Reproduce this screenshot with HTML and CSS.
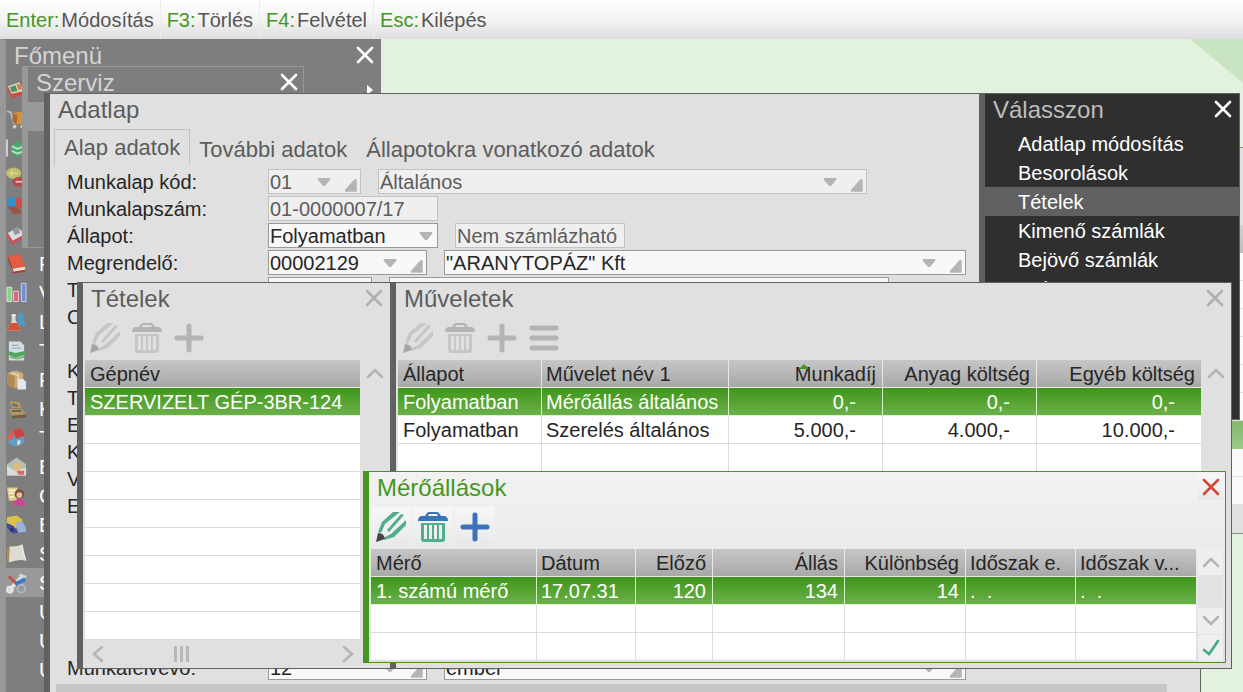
FILE: index.html
```html
<!DOCTYPE html>
<html lang="hu">
<head>
  <meta charset="UTF-8">
  <title>Szerviz</title>
  <link rel="stylesheet" href="styles.css">
</head>
<body>
  <svg class="defs" width="0" height="0">
    <symbol id="close" viewBox="0 0 18 18"><path d="M2 2L16 16M16 2L2 16" fill="none" stroke="currentColor" stroke-width="2.6" stroke-linecap="round"/></symbol>
    <symbol id="pencil" viewBox="0 0 30 30">
      <path class="c-pen" d="M2 20L6 10L17 0H24L9 12L5 21ZM11 18L25 2L28 3L13 20ZM8 28L9 25L15 22L30 8V13L18 25Z"/>
      <path class="c-tip" d="M0 30L2 21Q8 21 9 27Z"/>
    </symbol>
    <symbol id="trash" viewBox="0 0 30 30">
      <path class="c-lid" d="M7 4L9 1Q10 0 11 0H19Q20 0 21 1L23 4H27Q30 5 30 9H0Q0 5 3 4ZM10 4H20L19 2H11Z" fill-rule="evenodd"/>
      <path class="c-can" d="M3 11H27V27Q27 30 24 30H6Q3 30 3 27ZM6 13V27H9V13ZM11 13V27H14V13ZM16 13V27H19V13ZM21 13V27H24V13Z" fill-rule="evenodd"/>
    </symbol>
    <symbol id="plus" viewBox="0 0 30 30"><path class="c-plus" d="M15 3V27M3 15H27" fill="none" stroke-width="5" stroke-linecap="round"/></symbol>
    <symbol id="lines" viewBox="0 0 30 30"><path class="c-plus" d="M3 5H27M3 15H27M3 25H27" fill="none" stroke-width="5" stroke-linecap="round"/></symbol>
    <symbol id="up" viewBox="0 0 18 18"><path d="M2 13L9 6L16 13" fill="none" stroke="currentColor" stroke-width="2.5" stroke-linecap="round"/></symbol>
    <symbol id="down" viewBox="0 0 18 18"><path d="M2 5L9 12L16 5" fill="none" stroke="currentColor" stroke-width="2.5" stroke-linecap="round"/></symbol>
    <symbol id="left" viewBox="0 0 18 18"><path d="M13 2L5 9L13 16" fill="none" stroke="currentColor" stroke-width="2.5" stroke-linecap="round"/></symbol>
    <symbol id="right" viewBox="0 0 18 18"><path d="M5 2L13 9L5 16" fill="none" stroke="currentColor" stroke-width="2.5" stroke-linecap="round"/></symbol>
    <symbol id="check" viewBox="0 0 18 18"><path d="M2 11L7 15L16 2" fill="none" stroke="currentColor" stroke-width="2.6" stroke-linecap="round"/></symbol>
    <symbol id="drop" viewBox="0 0 14 14"><path d="M1 3H13Q14 4 13 5L8 11H6L1 5Q0 4 1 3Z" fill="#b4b4b4"/></symbol>
    <symbol id="corner" viewBox="0 0 14 14"><path d="M12 2V13H2Q1 12 2 11L10 2Z" fill="#b4b4b4"/></symbol>
  </svg>

  <header class="topbar">
    <span class="key"><b>Enter:</b>Módosítás</span>
    <span class="key"><b>F3:</b>Törlés</span>
    <span class="key"><b>F4:</b>Felvétel</span>
    <span class="key"><b>Esc:</b>Kilépés</span>
  </header>

  <main class="desktop">
    <svg class="wedge" viewBox="0 0 53 44"><path d="M0 0H53V44Z" fill="#c9e4c0"/></svg>

    <div class="back-window">
      <div class="back-top"></div>
      <div class="back-head"></div>
      <div class="back-rows"></div>
      <div class="back-selected"></div>
      <div class="back-rows short"></div>
    </div>

    <!-- Főmenü -->
    <section class="window menu main-menu">
      <div class="title"><h2>Főmenü</h2><button class="close" aria-label="Bezárás"><svg><use href="#close"/></svg></button></div>
      <ul>
        <li><svg viewBox="0 0 22 22"><path d="M1 9L17 3L21 15L6 20Z" fill="#d8483c"/><path d="M2 7L14 3L19 12L6 15Z" fill="#e9dfc4"/><path d="M4 8L10 6L12 12L6 13Z" fill="#3e9a63"/><path d="M11 5L15 5L17 10L13 11Z" fill="#d87e42"/></svg><i class="arrow"></i></li>
        <li><svg viewBox="0 0 22 22"><path d="M1 3L5 4L8 15H19" fill="none" stroke="#b9c4ca" stroke-width="2"/><path d="M7 5L17 3L21 6L20 15L10 17Z" fill="#e6952f"/><path d="M7 5L12 7L11 17L7 14Z" fill="#a9682b"/><circle cx="9" cy="19" r="2" fill="#d5d5d5"/><circle cx="17" cy="19" r="2" fill="#d5d5d5"/></svg></li>
        <li><svg viewBox="0 0 22 22"><path d="M1 2V20" stroke="#ddd" stroke-width="2"/><path d="M6 8L12 4L20 8V18L12 20L6 17Z" fill="#3faf6b"/><path d="M6 9L12 12L19 9M6 14L12 17L19 14" stroke="#bfe6c4" stroke-width="2" fill="none"/></svg></li>
        <li><svg viewBox="0 0 22 22"><ellipse cx="8" cy="7" rx="8" ry="6" fill="#c9c66a"/><path d="M3 7H13M6 4V10" stroke="#f0efb6"/><ellipse cx="14" cy="16" rx="7" ry="5" fill="#c54040"/><path d="M10 16H17" stroke="#f2bcb8" stroke-width="2"/></svg></li>
        <li><svg viewBox="0 0 22 22"><path d="M1 3L9 1L10 12L1 11Z" fill="#2f91d3"/><path d="M10 2L20 4V14L10 12Z" fill="#d64b3c"/><path d="M1 11L12 12L18 18L8 20Z" fill="#9e5147"/></svg></li>
        <li><svg viewBox="0 0 22 22"><path d="M0 11L12 5L21 12L7 21Z" fill="#d94b4e"/><path d="M2 9L12 3L20 10L7 17Z" fill="#e3e6ea"/><path d="M7 5L13 3L15 9L9 11Z" fill="#8f9ba7"/></svg></li>
        <li><svg viewBox="0 0 22 22"><path d="M2 2L15 1L20 14L7 16Z" fill="#ef5a3a"/><path d="M7 16L20 14V18L8 20Z" fill="#f4e8dc"/><path d="M2 2L7 16L8 20L3 9Z" fill="#a42f22"/><path d="M7 20L20 18" stroke="#b83320" stroke-width="2"/></svg>F</li>
        <li><svg viewBox="0 0 22 22"><path d="M1 5H6V20H1Z" fill="#8fdc8b" stroke="#e2ffe0"/><path d="M8 9H13V20H8Z" fill="#e8607a" stroke="#ffd9e1"/><path d="M16 1H21V20H16Z" fill="#7790e0" stroke="#d5ddff"/></svg>V</li>
        <li><svg viewBox="0 0 22 22"><path d="M13 2H18V8L21 15H12Z" fill="#4c9ed4"/><path d="M6 3H10V9L16 20H1L6 10Z" fill="#e8ded9"/><path d="M5 12H12L16 20H1Z" fill="#dc5034"/><path d="M6 4H10" stroke="#fff" stroke-width="2"/></svg>L</li>
        <li><svg viewBox="0 0 22 22"><path d="M3 1H15L19 5V21H3Z" fill="#dce9ec"/><path d="M6 5H13M6 8H16" stroke="#89a9c0"/><path d="M2 11L10 13L20 11V15L10 18L2 15Z" fill="#50a85b"/><path d="M4 17L12 19L19 17" stroke="#76bf7d" stroke-width="2" fill="none"/></svg>T</li>
        <li><svg viewBox="0 0 22 22"><path d="M1 4L11 1L18 4V16L9 20L1 16Z" fill="#d6ae72"/><path d="M1 4L9 7V20L1 16Z" fill="#b88a50"/><path d="M5 3L13 6V11" stroke="#f0dcb2" stroke-width="2" fill="none"/><path d="M12 10H18L21 13V21H12Z" fill="#eef3fa"/></svg>F</li>
        <li><svg viewBox="0 0 22 22"><path d="M4 3L14 4L16 10L6 10Z" fill="#c79b55"/><path d="M6 5L12 6L13 9L7 8Z" fill="#547b70"/><path d="M3 11L17 11L21 16L6 18Z" fill="#b89b63"/><path d="M6 13L16 13" stroke="#705f3f" stroke-width="2"/><path d="M6 18L21 17V20L7 21Z" fill="#70583b"/></svg>K</li>
        <li><svg viewBox="0 0 22 22"><path d="M3 10L7 7L19 9V16L9 20L3 17Z" fill="#5aa7ce"/><path d="M0 11L8 2L11 4L6 13Z" fill="#e85a50"/><path d="M8 2L16 1L20 9L10 12Z" fill="#d63d3d"/><path d="M12 14L15 13V17L12 19Z" fill="#eee"/></svg>T</li>
        <li><svg viewBox="0 0 22 22"><path d="M1 8L11 1L21 8V20H1Z" fill="#b7c8bc"/><circle cx="12" cy="11" r="5" fill="#e6c27f"/><path d="M1 10L9 15L21 12V20H1Z" fill="#e4e6e3"/><path d="M11 15H19V19H13Z" fill="#d86d62"/></svg>B</li>
        <li><svg viewBox="0 0 22 22"><path d="M1 2H12V16H3Z" fill="#efd285"/><path d="M3 5H10M3 8H9M4 12H8" stroke="#fff8dc" stroke-width="2"/><circle cx="14" cy="9" r="5" fill="#7b4c36"/><circle cx="14" cy="10" r="3" fill="#f1c5a5"/><path d="M8 21Q8 14 14 14Q20 14 20 21Z" fill="#dc3d9b"/></svg>G</li>
        <li><svg viewBox="0 0 22 22"><path d="M1 3L11 1L17 5V12L7 15L1 10Z" fill="#e7c944"/><path d="M1 9L8 12L13 19L7 20L1 14Z" fill="#3b45a4"/><path d="M10 9L17 7L21 14V18L13 19Z" fill="#9fb7e3"/><circle cx="6" cy="16" r="2" fill="#222b63"/></svg>B</li>
        <li><svg viewBox="0 0 22 22"><path d="M1 5L5 3V18L1 20Z" fill="#b98a4b"/><path d="M4 3Q10 4 17 1L21 18Q13 16 3 20Z" fill="#e9e6dd"/><path d="M17 1L18 9L21 18" stroke="#fff" fill="none"/></svg>S</li>
        <li class="selected"><svg viewBox="0 0 22 22"><path d="M4 18L17 4" stroke="#e4e7ed" stroke-width="4" stroke-linecap="round"/><path d="M14 2L17 5L21 4" stroke="#d7dbe2" stroke-width="3" fill="none"/><path d="M3 4L14 15" stroke="#d04838" stroke-width="3"/><path d="M10 12L20 7" stroke="#3479c2" stroke-width="4"/><circle cx="16" cy="17" r="4" fill="none" stroke="#a9bfce" stroke-width="2"/><circle cx="4" cy="18" r="3" fill="none" stroke="#f0f0f0" stroke-width="2"/></svg>S</li>
        <li><span></span>U</li>
        <li><span></span>U</li>
        <li><span></span>U</li>
      </ul>
    </section>

    <!-- Szerviz -->
    <section class="window menu service-menu">
      <div class="title"><h2>Szerviz</h2><button class="close" aria-label="Bezárás"><svg><use href="#close"/></svg></button></div>
      <ul>
        <li class="selected"></li>
      </ul>
    </section>

    <!-- Adatlap -->
    <section class="window sheet">
      <div class="title"><h2>Adatlap</h2></div>
      <nav class="tabs">
        <a class="active" href="#alap">Alap adatok</a>
        <a href="#tovabbi">További adatok</a>
        <a href="#allapotok">Állapotokra vonatkozó adatok</a>
      </nav>
      <form class="form" id="alap">
        <div class="row">
          <label for="kod">Munkalap kód:</label>
          <span class="field off w-code"><input id="kod" value="01" readonly><svg><use href="#drop"/></svg><svg><use href="#corner"/></svg></span>
          <span class="field off w-name"><input aria-label="Munkalap név" value="Általános" readonly><svg><use href="#drop"/></svg><svg><use href="#corner"/></svg></span>
        </div>
        <div class="row">
          <label for="szam">Munkalapszám:</label>
          <span class="field off w-number"><input id="szam" value="01-0000007/17" readonly></span>
        </div>
        <div class="row">
          <label for="allapot">Állapot:</label>
          <span class="field select w-number"><select id="allapot"><option>Folyamatban</option></select><svg><use href="#drop"/></svg></span>
          <span class="field off w-number"><input aria-label="Számlázhatóság" value="Nem számlázható" readonly></span>
        </div>
        <div class="row">
          <label for="megrendelo">Megrendelő:</label>
          <span class="field w-client"><input id="megrendelo" value="00002129"><svg><use href="#drop"/></svg><svg><use href="#corner"/></svg></span>
          <span class="field w-wide"><input aria-label="Megrendelő neve" value="&quot;ARANYTOPÁZ&quot; Kft"><svg><use href="#drop"/></svg><svg><use href="#corner"/></svg></span>
        </div>
        <div class="row">
          <label for="t">T</label>
          <span class="field w-short"><input id="t"></span>
          <span class="field w-mid"><input aria-label="T"></span>
        </div>
        <div class="row"><span>C</span></div>
        <div class="row"></div>
        <div class="row"><span>K</span></div>
        <div class="row"><span>T</span></div>
        <div class="row"><span>E</span></div>
        <div class="row"><span>K</span></div>
        <div class="row"><span>V</span></div>
        <div class="row"><span>E</span></div>
        <div class="row"></div>
        <div class="row"></div>
        <div class="row"></div>
        <div class="row"></div>
        <div class="row"></div>
        <div class="row">
          <label for="felvevo">Munkafelvevő:</label>
          <span class="field w-client"><input id="felvevo" value="12"><svg><use href="#drop"/></svg><svg><use href="#corner"/></svg></span>
          <span class="field w-wide"><input aria-label="Munkafelvevő neve" value="ember"><svg><use href="#drop"/></svg><svg><use href="#corner"/></svg></span>
        </div>
      </form>
      <div class="band"></div>
    </section>

    <!-- Válasszon -->
    <section class="window menu choose">
      <div class="title"><h2>Válasszon</h2><button class="close" aria-label="Bezárás"><svg><use href="#close"/></svg></button></div>
      <ul>
        <li>Adatlap módosítás</li>
        <li>Besorolások</li>
        <li class="selected">Tételek</li>
        <li>Kimenő számlák</li>
        <li>Bejövő számlák</li>
        <li>Dokumentum</li>
      </ul>
    </section>

    <!-- Tételek -->
    <section class="window items">
      <div class="title"><h2>Tételek</h2><button class="close" aria-label="Bezárás"><svg><use href="#close"/></svg></button></div>
      <div class="toolbar">
        <button aria-label="Módosítás"><svg><use href="#pencil"/></svg></button>
        <button aria-label="Törlés"><svg><use href="#trash"/></svg></button>
        <button aria-label="Felvétel"><svg><use href="#plus"/></svg></button>
      </div>
      <div class="content">
        <table>
          <thead><tr><th>Gépnév</th></tr></thead>
          <tbody>
            <tr class="selected"><td>SZERVIZELT GÉP-3BR-124</td></tr>
            <tr><td></td></tr>
            <tr><td></td></tr>
            <tr><td></td></tr>
            <tr><td></td></tr>
            <tr><td></td></tr>
            <tr><td></td></tr>
            <tr><td></td></tr>
            <tr><td></td></tr>
          </tbody>
        </table>
        <div class="scroll"><button aria-label="Fel"><svg><use href="#up"/></svg></button></div>
      </div>
      <div class="hscroll">
        <button aria-label="Balra"><svg><use href="#left"/></svg></button>
        <i class="grip"></i>
        <button aria-label="Jobbra"><svg><use href="#right"/></svg></button>
      </div>
    </section>

    <!-- Műveletek -->
    <section class="window operations">
      <div class="title"><h2>Műveletek</h2><button class="close" aria-label="Bezárás"><svg><use href="#close"/></svg></button></div>
      <div class="toolbar">
        <button aria-label="Módosítás"><svg><use href="#pencil"/></svg></button>
        <button aria-label="Törlés"><svg><use href="#trash"/></svg></button>
        <button aria-label="Felvétel"><svg><use href="#plus"/></svg></button>
        <button aria-label="Menü"><svg><use href="#lines"/></svg></button>
      </div>
      <div class="content">
        <table>
          <colgroup><col class="c-state"><col class="c-operation"><col class="c-cost"><col class="c-cost"><col></colgroup>
          <thead>
            <tr><th>Állapot</th><th>Művelet név 1</th><th class="num"><span class="sorted">Munkadíj</span></th><th class="num">Anyag költség</th><th class="num">Egyéb költség</th></tr>
          </thead>
          <tbody>
            <tr class="selected"><td>Folyamatban</td><td>Mérőállás általános</td><td class="money">0,-</td><td class="money">0,-</td><td class="money">0,-</td></tr>
            <tr><td>Folyamatban</td><td>Szerelés általános</td><td class="money">5.000,-</td><td class="money">4.000,-</td><td class="money">10.000,-</td></tr>
            <tr><td></td><td></td><td></td><td></td><td></td></tr>
            <tr><td></td><td></td><td></td><td></td><td></td></tr>
          </tbody>
        </table>
        <div class="scroll"><button aria-label="Fel"><svg><use href="#up"/></svg></button></div>
      </div>
    </section>

    <!-- Mérőállások -->
    <section class="window meters">
      <div class="title"><h2>Mérőállások</h2><button class="close" aria-label="Bezárás"><svg><use href="#close"/></svg></button></div>
      <div class="toolbar">
        <button aria-label="Módosítás"><svg><use href="#pencil"/></svg></button>
        <button aria-label="Törlés"><svg><use href="#trash"/></svg></button>
        <button aria-label="Felvétel"><svg><use href="#plus"/></svg></button>
      </div>
      <div class="content">
        <table>
          <colgroup><col class="c-meter"><col class="c-date"><col class="c-prev"><col class="c-value"><col class="c-diff"><col class="c-from"><col></colgroup>
          <thead>
            <tr><th>Mérő</th><th>Dátum</th><th class="num">Előző</th><th class="num">Állás</th><th class="num">Különbség</th><th>Időszak e.</th><th>Időszak v...</th></tr>
          </thead>
          <tbody>
            <tr class="selected"><td>1. számú mérő</td><td>17.07.31</td><td class="num">120</td><td class="num">134</td><td class="num">14</td><td>.&nbsp; .</td><td>.&nbsp; .</td></tr>
            <tr><td></td><td></td><td></td><td></td><td></td><td></td><td></td></tr>
            <tr><td></td><td></td><td></td><td></td><td></td><td></td><td></td></tr>
          </tbody>
        </table>
        <div class="scroll">
          <button aria-label="Fel"><svg><use href="#up"/></svg></button>
          <div class="track"></div>
          <button aria-label="Le"><svg><use href="#down"/></svg></button>
          <button class="ok" aria-label="Rendben"><svg><use href="#check"/></svg></button>
        </div>
      </div>
    </section>
  </main>
</body>
</html>
```
FILE: styles.css
```css
* {
  box-sizing: border-box;
}
body {
  margin: 0;
  height: 100vh;
  display: flex;
  flex-direction: column;
  overflow: hidden;
  font-family: "Liberation Sans", Arial, sans-serif;
  font-size: 20px;
  line-height: 24px;
  color: #262626;
}
button, input, select {
  font: inherit;
  color: inherit;
  border: 0;
  padding: 0;
  margin: 0;
  background: none;
}
h2 {
  margin: 0;
  font-size: 24px;
  font-weight: normal;
  line-height: 28px;
}
ul {
  list-style: none;
  margin: 0;
  padding: 0;
}
.defs {
  position: absolute;
}

/* top key bar */
.topbar {
  flex: none;
  display: flex;
  align-items: stretch;
  height: 39px;
  background: linear-gradient(#fdfdfd, #f4f4f5 50%, #dedee0);
  color: #555;
}
.key {
  display: flex;
  align-items: center;
  gap: 2px;
  padding: 0 6px;
  border-right: 1px solid #ececec;
}
.key:last-child {
  border-right: 0;
}
.key b {
  font-weight: normal;
  color: #45961f;
}

.desktop {
  flex: 1;
  position: relative;
  overflow: hidden;
  background: #e3f1df;
}
.wedge {
  position: absolute;
  top: 0;
  right: 0;
  width: 53px;
  height: 44px;
}
.back-window {
  position: absolute;
  top: 108px;
  right: 0;
  width: 24px;
  height: 387px;
  background: #e0e0e0;
  border: solid #888;
  border-width: 1px 0;
}
.back-top {
  height: 77px;
}
.back-head {
  height: 28px;
  background: linear-gradient(#d2d2d2, #bcbcbc);
}
.back-rows {
  height: 168px;
  background: repeating-linear-gradient(#fafafa 0 27px, #e2e2e2 27px 28px);
}
.back-rows.short {
  height: 56px;
}
.back-selected {
  height: 28px;
  background: linear-gradient(#83b96b, #9cca89);
}

/* windows */
.window {
  position: absolute;
  overflow: hidden;
  background: #e0e0e0;
  border: 1px solid #606060;
  border-left-width: 6px;
}
.title {
  display: flex;
  justify-content: space-between;
  height: 35px;
  padding: 2px 7px 0 8px;
  color: #5c5c5c;
}
.close {
  display: flex;
  align-items: center;
  justify-content: center;
  width: 18px;
  height: 26px;
  color: #b0b0b0;
}
.close svg {
  width: 18px;
  height: 18px;
}

.menu li {
  display: flex;
  align-items: center;
  height: 29px;
  color: #fff;
}
.main-menu {
  top: 0;
  left: 0;
  bottom: 0;
  width: 381px;
}
.main-menu, .service-menu {
  background: #7e7e7e;
  border-color: #989898;
}
.main-menu {
  border-width: 1px 0 0 6px;
  border-top-color: #7e7e7e;
}
.main-menu .title, .service-menu .title {
  color: #d4d4d4;
}
.menu .close {
  color: #fff;
}
.main-menu li svg, .main-menu li span {
  width: 21px;
  height: 22px;
  margin-right: 12px;
  opacity: 0.9;
}
.main-menu .selected, .service-menu .selected {
  background: #999;
}
.arrow {
  margin-left: auto;
  margin-right: 8px;
  border: solid transparent;
  border-width: 5px 0 5px 6px;
  border-left-color: #fff;
}
.service-menu {
  top: 27px;
  left: 22px;
  width: 282px;
  height: 182px;
}
.service-menu .title {
  padding-right: 5px;
}
.choose {
  top: 54px;
  right: 3px;
  width: 261px;
  height: 327px;
  background: #2f2f2f;
}
.choose .title {
  color: #bdbdbd;
}
.choose li {
  padding-left: 33px;
}
.choose .selected {
  background: #606060;
}

/* data sheet */
.sheet {
  top: 54px;
  left: 44px;
  right: 42px;
  bottom: 0;
  border-bottom: 0;
}
.tabs {
  display: flex;
  height: 36px;
  padding-left: 4px;
  font-size: 22px;
}
.tabs a {
  padding: 9px 10px 0 9px;
  color: #5c5c5c;
  text-decoration: none;
}
.tabs .active {
  padding: 6px 9px 0;
  border: 1px solid #c2c2c2;
  border-bottom: 0;
}
.form {
  padding: 4px 0 0 17px;
}
.row {
  display: flex;
  gap: 17px;
  height: 27px;
}
.row label {
  width: 184px;
}
.row label, .row > span:first-child {
  padding-top: 1px;
}
.field {
  display: flex;
  align-items: center;
  gap: 12px;
  height: 25px;
  padding: 0 1px;
  background: #f8f8f8;
  border: 1px solid #999;
}
.field input, .field select {
  flex: 1;
  min-width: 0;
  height: 23px;
  appearance: none;
  outline: 0;
}
.field svg {
  flex: none;
  width: 14px;
  height: 14px;
}
.field svg:last-child {
  width: 16px;
  height: 16px;
  align-self: flex-end;
}
.field.select {
  padding-right: 4px;
}
.field.select svg {
  width: 14px;
  height: 14px;
  align-self: center;
}
.off {
  background: #efefef;
  border-color: #c2c2c2;
  color: #5c5c5c;
}
.w-code { width: 93px; }
.w-name { width: 489px; }
.w-number { width: 170px; }
.w-client { width: 159px; }
.w-wide { width: 522px; }
.w-short { width: 104px; }
.w-mid { width: 500px; }
.band {
  height: 20px;
  margin: 2px 33px 0 6px;
  background: #c6c6c6;
}

/* table windows */
.items {
  top: 243px;
  left: 77px;
  width: 320px;
  height: 387px;
}
.operations {
  top: 243px;
  left: 390px;
  right: 11px;
  height: 387px;
}
.items .title {
  padding-right: 13px;
}
.toolbar {
  display: flex;
  gap: 2px;
  padding-left: 2px;
  margin-bottom: 2px;
}
.toolbar button {
  display: flex;
  align-items: center;
  justify-content: center;
  width: 40px;
  height: 40px;
}
.toolbar svg {
  width: 30px;
  height: 30px;
}
.c-pen, .c-can { fill: var(--pen, #c6c6c6); }
.c-tip { fill: var(--tip, #a6a6a6); }
.c-lid { fill: var(--lid, #b4b4b4); }
.c-plus { stroke: var(--lid, #b4b4b4); }

.content {
  display: flex;
  padding-left: 2px;
}
table {
  flex: 1;
  table-layout: fixed;
  width: 100%;
  border-spacing: 0;
  background: #fff;
}
th, td {
  height: 28px;
  padding: 0 5px 0 4px;
  border-right: 1px solid #dcdcdc;
  border-bottom: 1px solid #dcdcdc;
  font-weight: normal;
  text-align: left;
  white-space: nowrap;
}
th:first-child, td:first-child {
  padding-left: 5px;
}
th:last-child, td:last-child {
  border-right: 0;
}
th {
  background: linear-gradient(#c6c6c6, #a8a8a8);
  background-clip: padding-box;
  border-color: #e8e8e8;
}
.selected td {
  color: #fff;
  background: linear-gradient(#3f961a, #6bb04a);
  background-clip: padding-box;
  border-color: #d8f2cc;
}
.num {
  padding-right: 6px;
  text-align: right;
}
.money {
  padding-right: 26px;
  text-align: right;
}
.sorted {
  position: relative;
}
.sorted::before {
  content: "";
  position: absolute;
  top: 1px;
  left: 4px;
  border: solid transparent;
  border-width: 0 5px 5px;
  border-bottom-color: #45961f;
}
.c-state { width: 144px; }
.c-operation { width: 187px; }
.c-cost { width: 154px; }
.c-meter { width: 166px; }
.c-date { width: 99px; }
.c-prev { width: 77px; }
.c-value { width: 132px; }
.c-diff { width: 121px; }
.c-from { width: 110px; }

.scroll {
  flex: none;
  display: flex;
  flex-direction: column;
  width: 29px;
  padding: 0 2px;
}
.operations .scroll {
  width: 30px;
}
.items .scroll {
  width: 36px;
  padding-right: 9px;
}
.scroll button, .hscroll button {
  display: flex;
  align-items: center;
  justify-content: center;
  width: 25px;
  height: 26px;
  color: #b4b4b4;
}
.scroll svg, .hscroll svg {
  width: 18px;
  height: 18px;
}
.hscroll {
  display: flex;
  align-items: center;
  justify-content: space-between;
  height: 28px;
  padding: 0 36px 0 2px;
}
.grip {
  width: 15px;
  height: 16px;
  margin-right: 82px;
  background: repeating-linear-gradient(90deg, #b8b8b8 0 3px, #e0e0e0 3px 6px);
}

.meters {
  top: 432px;
  left: 363px;
  right: 17px;
  padding-bottom: 1px;
  background: linear-gradient(#f2f2f2, #e0e0e0);
  border-color: #45961f;
  --pen: #52ad8c;
  --tip: #444;
  --lid: #3a74b8;
}
.meters .c-can {
  fill: #45a9a9;
}
.meters h2 {
  color: #45961f;
}
.meters .title {
  padding-right: 2px;
}
.meters .close {
  width: 25px;
  color: #d04830;
}
.meters .close, .meters .toolbar button, .meters .ok {
  background: linear-gradient(#f7f7f7, #e8e8e8);
}
.meters .scroll button {
  background: #efefef;
}
.meters .track {
  flex: 1;
  background: #e2e2e2;
}
.meters .scroll .ok {
  margin-top: 1px;
  color: #45a985;
}
```
